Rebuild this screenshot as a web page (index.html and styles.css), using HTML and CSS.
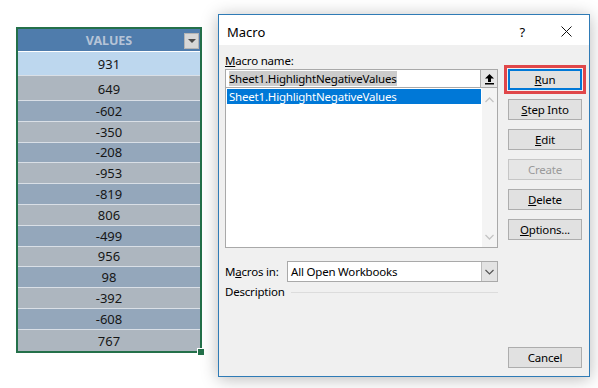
FILE: index.html
```html
<!DOCTYPE html>
<html lang="en">
<head>
    <meta charset="UTF-8">
    <title>Macro</title>
    <link rel="stylesheet" href="styles.css">
</head>
<body>

<!-- Hoja con la columna de valores -->
<div class="sheet">
    <div class="col-head">
        VALUES
        <span class="filter"><span class="tri"></span></span>
    </div>
    <div class="cell sel">931</div>
    <div class="cell tall">649</div>
    <div class="cell alt">-602</div>
    <div class="cell">-350</div>
    <div class="cell alt">-208</div>
    <div class="cell">-953</div>
    <div class="cell alt">-819</div>
    <div class="cell">806</div>
    <div class="cell alt">-499</div>
    <div class="cell">956</div>
    <div class="cell alt">98</div>
    <div class="cell">-392</div>
    <div class="cell alt">-608</div>
    <div class="cell last">767</div>
    <span class="handle"></span>
</div>

<!-- Ventana Macro -->
<div class="dialog">
    <div class="titlebar">
        <span class="title">Macro</span>
        <span class="help">?</span>
        <svg class="close" width="11" height="11" viewBox="0 0 11 11">
            <path d="M0.5 0.5 L10.5 10.5 M10.5 0.5 L0.5 10.5" stroke="#111" stroke-width="1"/>
        </svg>
    </div>

    <div class="dialog-body">
        <div class="main">
            <div class="label"><u>M</u>acro name:</div>
            <div class="name-field">
                <span class="name-text">Sheet1.HighlightNegativeValues</span>
                <span class="up-btn">
                    <svg width="11" height="12" viewBox="0 0 11 12">
                        <path d="M5.5 1 L10 5.5 L7 5.5 L7 9 L4 9 L4 5.5 L1 5.5 Z" fill="#000"/>
                        <rect x="1" y="10" width="9" height="1.5" fill="#000"/>
                    </svg>
                </span>
            </div>
            <div class="macro-list">
                <div class="items">
                    <div class="item selected">Sheet1.HighlightNegativeValues</div>
                </div>
                <div class="scroll">
                    <svg width="9" height="6" viewBox="0 0 9 6"><path d="M0.5 5 L4.5 1 L8.5 5" fill="none" stroke="#c4c4c4" stroke-width="1.3"/></svg>
                    <svg width="9" height="6" viewBox="0 0 9 6"><path d="M0.5 1 L4.5 5 L8.5 1" fill="none" stroke="#c4c4c4" stroke-width="1.3"/></svg>
                </div>
            </div>
            <div class="macros-in">
                <span class="in-label">M<u>a</u>cros in:</span>
                <div class="select">
                    <span class="select-text">All Open Workbooks</span>
                    <span class="drop">
                        <svg width="9" height="6" viewBox="0 0 9 6"><path d="M0.5 1 L4.5 5 L8.5 1" fill="none" stroke="#555" stroke-width="1.2"/></svg>
                    </span>
                </div>
            </div>
            <div class="description">Description</div>
        </div>

        <div class="buttons">
            <button class="btn run"><u>R</u>un</button>
            <button class="btn"><u>S</u>tep Into</button>
            <button class="btn"><u>E</u>dit</button>
            <button class="btn disabled">Create</button>
            <button class="btn"><u>D</u>elete</button>
            <button class="btn"><u>O</u>ptions...</button>
            <button class="btn cancel">Cancel</button>
        </div>
    </div>
</div>

</body>
</html>
```

FILE: styles.css
```css
body {
    margin: 0;
    width: 598px;
    height: 388px;
    overflow: hidden;
    position: relative;
    background-color: #ffffff;
    font-family: "Noto Sans", sans-serif;
}

/* Hoja de calculo */
.sheet {
    position: relative;
    box-sizing: border-box;
    width: 186px;
    margin: 27px 0 0 16px;
    border: 2px solid #24704a;
}

.col-head {
    position: relative;
    height: 22px;
    display: flex;
    justify-content: center;
    align-items: center;
    background-color: #4f7cac;
    color: #b6c4d7;
    font-size: 12.5px;
    font-weight: bold;
    border-bottom: 1px solid #ffffff;
}

.filter {
    position: absolute;
    right: 1px;
    top: 4px;
    width: 15px;
    height: 16px;
    box-sizing: border-box;
    background-color: #d7d7d7;
    border: 1px solid #b4b4b4;
    display: flex;
    justify-content: center;
    align-items: center;
}

.tri {
    width: 0;
    height: 0;
    border-left: 4px solid transparent;
    border-right: 4px solid transparent;
    border-top: 4px solid #4a4a4a;
}

.cell {
    box-sizing: border-box;
    height: 20.8px;
    display: flex;
    justify-content: center;
    align-items: flex-end;
    padding-bottom: 2px;
    font-size: 13px;
    line-height: 15px;
    color: #161616;
    background-color: #adb6bf;
    border-bottom: 1px solid #d9dfe6;
}

.cell.sel {
    height: 24px;
    padding-bottom: 3px;
    background-color: #bdd7ee;
}

.cell.tall {
    height: 25px;
    padding-bottom: 3px;
}

.cell.alt {
    background-color: #94a7bb;
}

.cell.last {
    border-bottom: none;
}

.handle {
    position: absolute;
    right: -5px;
    bottom: -5px;
    width: 6px;
    height: 6px;
    background-color: #24704a;
    border: 1px solid #ffffff;
}

/* Ventana */
.dialog {
    position: absolute;
    left: 218px;
    top: 14px;
    width: 372px;
    height: 363px;
    box-sizing: border-box;
    border: 1px solid #2f7bb6;
    background-color: #f0f0f0;
    box-shadow: 0 2px 16px rgba(0, 0, 0, 0.28);
    display: flex;
    flex-direction: column;
    font-size: 11.5px;
    letter-spacing: -0.2px;
    color: #000000;
}

.titlebar {
    height: 30px;
    box-sizing: border-box;
    padding: 3px 17px 0 8px;
    background-color: #ffffff;
    display: flex;
    align-items: center;
}

.title {
    flex: 1;
    font-size: 13px;
    letter-spacing: 0;
}

.help {
    font-size: 13px;
    margin-right: 36px;
}

.dialog-body {
    flex: 1;
    display: flex;
    gap: 10px;
    padding: 8px 7px 8px 6px;
}

.main {
    width: 273px;
    display: flex;
    flex-direction: column;
}

.label {
    height: 16px;
    line-height: 16px;
}

.name-field {
    box-sizing: border-box;
    height: 19px;
    display: flex;
    align-items: center;
    background-color: #ffffff;
    border: 1px solid #a9a9a9;
    padding-left: 3px;
}

.name-text {
    background-color: #cccccc;
    line-height: 15px;
}

.up-btn {
    margin-left: auto;
    width: 17px;
    height: 17px;
    box-sizing: border-box;
    background-color: #e6e6e6;
    border-left: 1px solid #adadad;
    display: flex;
    justify-content: center;
    align-items: center;
}

.macro-list {
    box-sizing: border-box;
    height: 160px;
    display: flex;
    background-color: #ffffff;
    border: 1px solid #a9a9a9;
    border-top: none;
}

.items {
    flex: 1;
    padding: 1px;
}

.item {
    height: 15px;
    line-height: 15px;
    padding-left: 2px;
}

.item.selected {
    background-color: #0078d7;
    color: #ffffff;
}

.scroll {
    width: 15px;
    background-color: #f4f4f4;
    display: flex;
    flex-direction: column;
    justify-content: space-between;
    align-items: center;
    padding: 9px 0 7px;
}

.macros-in {
    margin-top: 13px;
    height: 21px;
    display: flex;
    align-items: center;
}

.in-label {
    width: 62px;
}

.select {
    flex: 1;
    height: 21px;
    box-sizing: border-box;
    display: flex;
    align-items: center;
    background-color: #ffffff;
    border: 1px solid #a9a9a9;
    padding-left: 3px;
}

.select-text {
    flex: 1;
}

.drop {
    width: 16px;
    height: 19px;
    box-sizing: border-box;
    background-color: #e3e3e3;
    border-left: 1px solid #bcbcbc;
    display: flex;
    justify-content: center;
    align-items: center;
}

.description {
    margin-top: 2px;
    height: 16px;
    line-height: 16px;
    display: flex;
    align-items: center;
}

.description::after {
    content: "";
    flex: 1;
    height: 1px;
    margin-left: 6px;
    background-color: #dcdcdc;
}

.buttons {
    width: 74px;
    display: flex;
    flex-direction: column;
    gap: 9px;
    padding-top: 16px;
}

.btn {
    height: 21px;
    box-sizing: border-box;
    padding: 0;
    font-family: "Noto Sans", sans-serif;
    font-size: 11.5px;
    letter-spacing: -0.2px;
    color: #000000;
    background-color: #e1e1e1;
    border: 1px solid #adadad;
}

.btn.run {
    border: 2px solid #0078d7;
    outline: 3px solid #e0474a;
    outline-offset: 1px;
}

.btn.disabled {
    color: #9a9a9a;
    background-color: #e6e6e6;
    border-color: #c6c6c6;
}

.btn.cancel {
    margin-top: auto;
}
```
